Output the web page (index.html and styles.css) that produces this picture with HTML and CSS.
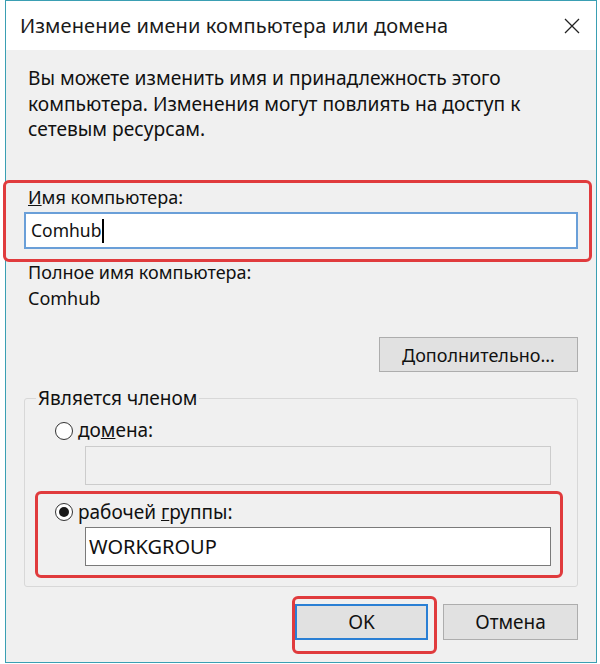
FILE: index.html
```html
<!DOCTYPE html>
<html lang="ru">
<head>
<meta charset="utf-8">
<link rel="stylesheet" href="styles.css">
</head>
<body>
<div class="window">
  <div class="titlebar">
    <span class="title">Изменение имени компьютера или домена</span>
    <svg class="close" width="16" height="16" viewBox="0 0 16 16"><path d="M1 1L15 15M15 1L1 15" stroke="#222" stroke-width="1.3" fill="none"/></svg>
  </div>
  <div class="content">
    <p class="intro">Вы можете изменить имя и принадлежность этого компьютера. Изменения могут повлиять на доступ к сетевым ресурсам.</p>
    <div class="label label-name"><u>И</u>мя компьютера:</div>
    <div class="input focused">Comhub<span class="caret"></span></div>
    <div class="label label-full">Полное имя компьютера:</div>
    <div class="label">Comhub</div>
    <div class="more-row"><button class="btn btn-more"><u>Д</u>ополнительно...</button></div>
    <fieldset class="group">
      <legend>Является членом</legend>
      <div class="radio-row"><span class="radio"></span><span>до<u>м</u>ена:</span></div>
      <div class="input disabled"></div>
      <div class="radio-row second"><span class="radio checked"></span><span>рабочей <u>г</u>руппы:</span></div>
      <div class="input normal">WORKGROUP</div>
    </fieldset>
    <div class="actions">
      <button class="btn btn-ok">OK</button>
      <button class="btn btn-cancel">Отмена</button>
    </div>
  </div>
  <div class="mark mark-name"></div>
  <div class="mark mark-group"></div>
  <div class="mark mark-ok"></div>
</div>
</body>
</html>
```

FILE: styles.css
```css
html, body {
  margin: 0;
  padding: 0;
  background: #ffffff;
}
body {
  width: 600px;
  height: 664px;
  font-family: "Noto Sans", "Open Sans", sans-serif;
  color: #111;
}
.window {
  position: relative;
  margin-left: 5px;
  width: 590px;
  height: 661px;
  border: 1px solid #3a9fb3;
  background: #f0f0f0;
}
.titlebar {
  height: 49px;
  background: #ffffff;
  display: flex;
  align-items: center;
  justify-content: space-between;
  padding: 0 16px 0 14px;
}
.title {
  font-size: 20px;
  color: #1a1a1a;
  letter-spacing: 0.1px;
}
.close {
  display: block;
}
.content {
  padding: 15px 18px 0 18px;
  font-size: 18px;
  line-height: 25.5px;
}
.intro {
  margin: 0 0 0 4px;
  width: 495px;
  font-size: 19.2px;
}
.label {
  margin-left: 4px;
}
.label-name {
  margin-top: 43px;
}
.label-full {
  margin-top: 11px;
}
.input {
  box-sizing: border-box;
  height: 37px;
  background: #fff;
  border: 1px solid #7a7a7a;
  display: flex;
  align-items: center;
  padding-left: 6px;
}
.input.focused {
  margin-top: 2px;
  border: 2px solid #6a9fd8;
  padding-left: 5px;
  font-size: 17.5px;
}
.caret {
  display: inline-block;
  width: 1.5px;
  height: 24px;
  background: #000;
  margin-left: 1px;
}
.more-row {
  display: flex;
  justify-content: flex-end;
  margin-top: 26px;
}
.btn {
  box-sizing: border-box;
  font-family: inherit;
  font-size: 18px;
  color: #111;
  background: #e1e1e1;
  border: 1px solid #adadad;
  padding: 0;
  height: 35px;
}
.btn-more {
  width: 199px;
}
.group {
  margin: 14px 0 0 0;
  padding: 6.5px 26px 20px 30px;
  border: 1px solid #d8d8d8;
  border-radius: 3px;
  min-width: 0;
  font-size: 19px;
}
.group legend {
  padding: 0 2px;
  margin-left: -19px;
}
.radio-row {
  display: flex;
  align-items: center;
  gap: 5px;
}
.radio-row.second {
  margin-top: 15px;
}
.radio {
  box-sizing: border-box;
  width: 18px;
  height: 18px;
  border-radius: 50%;
  border: 1px solid #333;
  background: #fff;
  position: relative;
}
.radio.checked::after {
  content: "";
  position: absolute;
  left: 3px;
  top: 3px;
  width: 10px;
  height: 10px;
  border-radius: 50%;
  background: #1a1a1a;
}
.input.disabled,
.input.normal {
  margin-left: 30px;
  height: 39px;
}
.input.disabled {
  margin-top: 2px;
  background: #f0f0f0;
  border-color: #cccccc;
}
.input.normal {
  margin-top: 2px;
  padding-left: 3px;
  font-size: 20px;
}
.actions {
  display: flex;
  justify-content: flex-end;
  gap: 15px;
  margin-top: 17px;
}
.btn-ok {
  width: 133px;
  height: 36px;
  border: 2px solid #2a7fd4;
  background: #e1e1e1;
  font-size: 19px;
}
.btn-cancel {
  width: 135px;
  height: 36px;
  font-size: 19px;
}
.mark {
  position: absolute;
  box-sizing: border-box;
  border: 3px solid #e03b3d;
  border-radius: 6px;
}
.mark-name {
  left: -3px;
  top: 179px;
  width: 589px;
  height: 82px;
}
.mark-group {
  left: 29px;
  top: 490px;
  width: 528px;
  height: 87px;
}
.mark-ok {
  left: 286px;
  top: 595px;
  width: 145px;
  height: 58px;
}
```
